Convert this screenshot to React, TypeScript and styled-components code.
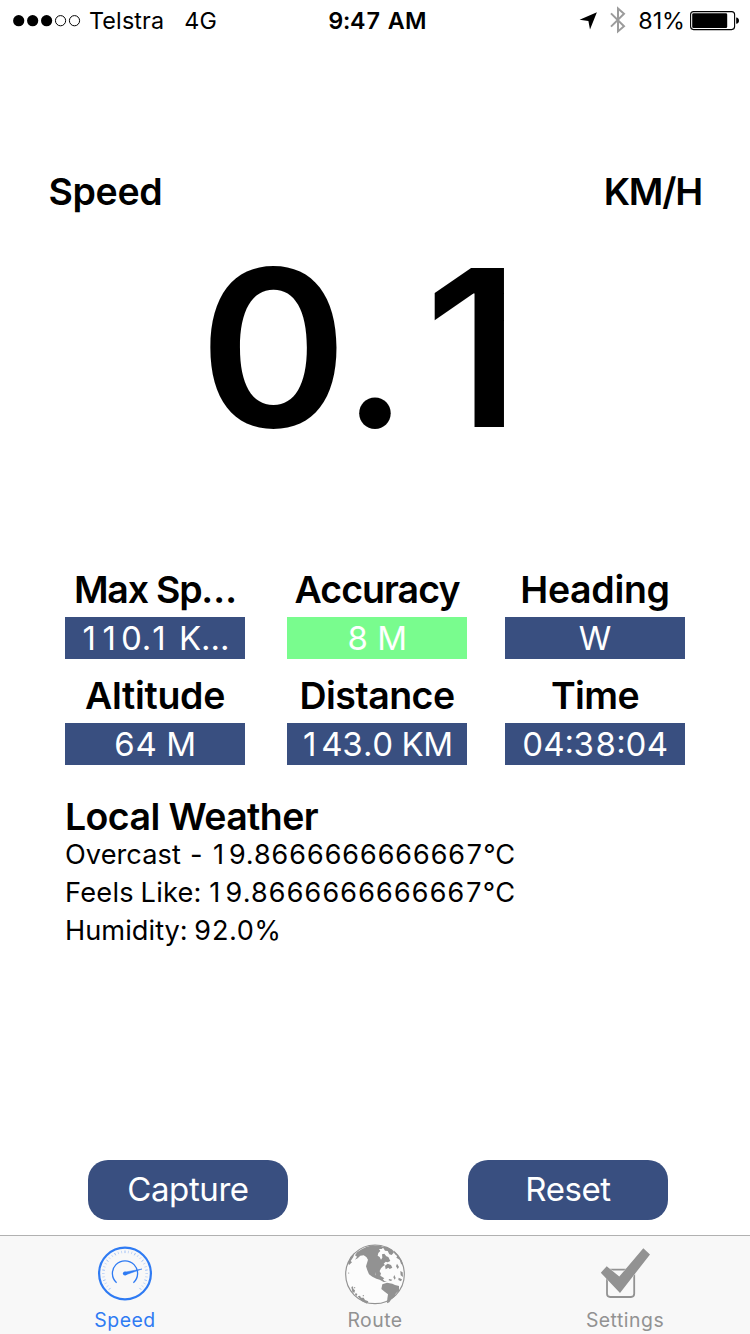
import React from "react";
import styled, { createGlobalStyle } from "styled-components";

const BLUE = "#394f80";
const GREEN = "#79fc8e";
const TINT = "#2f7bf3";
const GREY = "#929292";

const GlobalStyle = createGlobalStyle`
  html, body { margin: 0; padding: 0; background: #fff; }
  * { box-sizing: border-box; }
`;

const Screen = styled.div`
  display: flex;
  flex-direction: column;
  width: 750px;
  height: 1334px;
  overflow: hidden;
  background: #fff;
  color: #000;
  font-family: Inter, "Liberation Sans", sans-serif;
  white-space: nowrap;
`;

/* Status bar */
const StatusBar = styled.header`
  display: grid;
  grid-template-columns: 1fr auto 1fr;
  align-items: center;
  height: 41px;
  padding: 0 10px 0 13px;
  font-size: 23.3px;
  line-height: 41px;
`;

const StatusGroup = styled.div<{ $end?: boolean }>`
  display: flex;
  align-items: center;
  justify-content: ${(p) => (p.$end ? "flex-end" : "flex-start")};
  height: 41px;
`;

const Carrier = styled.span`
  margin-left: 7px;
  letter-spacing: 0.15px;
`;

const Network = styled.span`
  margin-left: 20px;
  letter-spacing: 0.2px;
`;

const Clock = styled.span`
  padding-left: 2px;
  font-weight: 600;
  letter-spacing: 0.35px;
  font-feature-settings: "tnum";
`;

const BatteryLevel = styled.span`
  margin: 0 5px 0 13px;
`;

/* Speed readout */
const Main = styled.main`
  display: flex;
  flex: 1;
  flex-direction: column;
  padding-bottom: 15px;
`;

const SpeedHeader = styled.div`
  display: flex;
  justify-content: space-between;
  margin-top: 127px;
  padding: 0 48px 0 48.5px;
  font-size: 37.5px;
  font-weight: 600;
  line-height: 47px;
`;

const Title = styled.span<{ $tracking: number }>`
  letter-spacing: ${(p) => p.$tracking}px;
`;

const Readout = styled.div`
  display: flex;
  justify-content: center;
  height: 201px;
  margin-top: 32px;
  padding-right: 8px;
  font-size: 219px;
  font-weight: 600;
  line-height: 201px;
`;

const ReadoutGlyph = styled.span<{ $width: number; $stretch?: number; $weight?: number }>`
  display: flex;
  justify-content: center;
  width: ${(p) => p.$width}px;
  font-weight: ${(p) => p.$weight ?? 600};
  transform: scaleX(${(p) => p.$stretch ?? 1});
`;

/* Stats */
const Stats = styled.section`
  display: grid;
  grid-template-columns: 222px 218px 180px;
  row-gap: 18px;
  margin: 123px 0 0 65px;
`;

const Stat = styled.div`
  display: flex;
  flex-direction: column;
  gap: 9px;
  width: 180px;
  text-align: center;
`;

const StatLabel = styled.div<{ $tracking: number }>`
  height: 37px;
  font-size: 37.5px;
  font-weight: 600;
  line-height: 37px;
  letter-spacing: ${(p) => p.$tracking}px;
`;

const StatValue = styled.div<{ $good?: boolean; $tracking: number }>`
  height: 42px;
  background: ${(p) => (p.$good ? GREEN : BLUE)};
  color: #fff;
  font-size: 33px;
  line-height: 42px;
  letter-spacing: ${(p) => p.$tracking}px;
  font-feature-settings: "tnum";
`;

/* The tabular "1" has a foot, so the plain one is padded to a digit's width */
const PlainOne = styled.span`
  padding: 0 0.16em 0 0.05em;
  font-feature-settings: "tnum" 0;
`;

/* Weather */
const Weather = styled.section`
  margin: 33px 0 0 65px;
`;

const WeatherTitle = styled.h2`
  margin: 0 0 1px;
  font-size: 37.5px;
  font-weight: 600;
  line-height: 37px;
  letter-spacing: -0.6px;
`;

const WeatherLine = styled.p<{ $tracking: number }>`
  margin: 0;
  font-size: 27.2px;
  line-height: 38px;
  letter-spacing: ${(p) => p.$tracking}px;
  word-spacing: -0.8px;
  font-feature-settings: "tnum";
`;

/* Buttons */
const Actions = styled.div`
  display: flex;
  gap: 180px;
  margin-top: auto;
  padding-left: 88px;
`;

const ActionButton = styled.button`
  width: 200px;
  height: 60px;
  padding: 0 0 2px;
  border: 0;
  border-radius: 20px;
  background: ${BLUE};
  color: #fff;
  font: 400 33px/56px Inter, "Liberation Sans", sans-serif;
  letter-spacing: -0.42px;
`;

/* Tab bar */
const TabBar = styled.nav`
  display: grid;
  grid-template-columns: repeat(3, 1fr);
  height: 99px;
  border-top: 1px solid #b1b1b1;
  background: #f8f8f8;
`;

const Tab = styled.div<{ $active?: boolean }>`
  display: flex;
  flex-direction: column;
  align-items: center;
  padding-top: 7px;
  color: ${(p) => (p.$active ? TINT : GREY)};
  font-size: 19.4px;
  line-height: 24px;
  letter-spacing: 0.5px;

  svg {
    display: block;
    margin-bottom: 1px;
  }
`;

const SignalDots = () => (
  <svg width="69" height="12" viewBox="0 0 69 12">
    {[0, 1, 2, 3, 4].map((i) => (
      <circle
        key={i}
        cx={5.7 + i * 13.95}
        cy="5.7"
        r={i < 3 ? 5.6 : 5.1}
        fill={i < 3 ? "#000" : "none"}
        stroke={i < 3 ? "none" : "#000"}
        strokeWidth="1"
      />
    ))}
  </svg>
);

const LocationArrow = () => (
  <svg width="18" height="18" viewBox="0 0 18 18">
    <path d="M17.9 0.3 11 17.6 9.4 9 0.6 7.7Z" fill="#000" />
  </svg>
);

const BluetoothSvg = styled.svg`
  margin: 0 -1px 1px 13px;
`;

const Bluetooth = () => (
  <BluetoothSvg width="16" height="28" viewBox="0 0 16 28">
    <path d="M1 7.4 14 20.2 8 25.4V2.4L14 7.8 1 20.6" fill="none" stroke="#9b9b9b" strokeWidth="2" />
  </BluetoothSvg>
);

const Battery = () => (
  <svg width="50" height="20" viewBox="0 0 50 20">
    <rect x="0.6" y="0.6" width="44" height="18" rx="3" fill="none" stroke="#000" strokeWidth="1.1" />
    <rect x="2.2" y="2.2" width="35" height="14.8" rx="1.3" fill="#000" />
    <path d="M46.2 6.6C48 6.8 49 8 49 9.7S48 12.6 46.2 12.8Z" fill="#000" />
  </svg>
);

const ticks = Array.from({ length: 31 }, (_, i) => ((135 + i * 9) * Math.PI) / 180);

const GaugeIcon = () => (
  <svg width="62" height="64" viewBox="0 0 62 64" fill="none" stroke={TINT}>
    <circle cx="31" cy="30.5" r="25.9" strokeWidth="2.2" />
    {ticks.map((a, i) => (
      <path
        key={i}
        d={`M${31 + 20.4 * Math.cos(a)} ${30.5 + 20.4 * Math.sin(a)}L${31 + 23 * Math.cos(a)} ${30.5 + 23 * Math.sin(a)}`}
        strokeWidth="0.9"
        opacity={i % 3 ? 0.28 : 0.5}
      />
    ))}
    <path d="M22.6 39.8A12.6 12.6 0 1 1 39.4 39.8" strokeWidth="1.3" />
    <circle cx="31" cy="30.5" r="2.1" fill={TINT} stroke="none" />
    <path d="M30.6 29.2 48 26 31.4 31.9Z" fill={TINT} strokeWidth="0.5" />
  </svg>
);

const GlobeIcon = () => (
  <svg width="62" height="64" viewBox="0 -1 186 192">
    <g transform="translate(-3 -1)">
      <circle cx="96" cy="94" r="88" fill="#fcfcfc" stroke={GREY} strokeWidth="3.5" />
      <g fill={GREY}>
        <path d="M42 28 56 19 70 12 88 7 112 8 122 13 116 18 108 18 112 24 106 30 104 38 110 42 114 50 118 44 117 34 124 32 130 40 136 42 142 54 134 58 128 56 122 62 126 66 120 70 114 76 110 84 112 91 104 86 96 88 96 96 104 98 108 94 110 102 118 107 124 114 132 116 122 117 110 110 100 107 88 101 78 94 73 82 69 70 72 60 75 50 70 42 62 37 52 38 44 46 36 50 42 41 36 37Z" />
        <path d="M96 86 104 84 114 90 112 98 124 106 118 110 98 104Z" />
        <path d="M119 12 132 11 148 20 152 29 146 36 139 34 134 24 126 23Z" />
        <path d="M152 22 166 36 176 52 181 68 174 62 170 50 160 44 163 38 156 34Z" />
        <path d="M22 42 34 30 31 42 23 54 27 58 18 66 15 60Z" />
        <path d="M126 68 134 62 144 66 148 74 140 78 136 74 128 79Z" />
        <path d="M138 108 148 110 144 114 137 112ZM154 96 158 105 155 110 151 103ZM162 62 168 72 164 78 159 70ZM172 84 179 88 180 102 173 97ZM167 104 177 109 174 115 166 111Z" />
        <path d="M118 124 132 119 148 122 156 126 168 129 168 143 159 151 154 162 145 169 139 178 132 181 133 167 135 154 126 147 115 138Z" />
        <path d="M25 132 30 130 31 138 36 142 34 150 28 146ZM38 150 43 153 41 159 36 155ZM44 160 51 158 54 164 62 164 66 171 76 175 72 182 56 174Z" />
        <circle cx="35" cy="134" r="1.8" />
        <circle cx="61" cy="158" r="2" />
        <circle cx="17" cy="90" r="1.8" />
      </g>
    </g>
  </svg>
);

const CheckboxIcon = () => (
  <svg width="62" height="64" viewBox="0 0 62 64">
    <rect x="13" y="26.6" width="27.2" height="27.4" rx="3.2" fill="none" stroke={GREY} strokeWidth="1.8" />
    <path
      d="M6.8 29.7 12.7 23.2 25.3 33.6 49.3 5.3 56 11.4 26 50Z"
      fill={GREY}
      stroke="#fafafa"
      strokeWidth="0.8"
      paintOrder="stroke"
    />
  </svg>
);

const Figures = ({ text }: { text: string }) => (
  <>{text.split("").map((c, i) => (c === "1" ? <PlainOne key={i}>1</PlainOne> : c))}</>
);

const stats = [
  { label: "Max Sp…", lt: -1.22, value: "110.1 K…", vt: -0.3 },
  { label: "Accuracy", lt: -0.95, value: "8 M", vt: -0.1, good: true },
  { label: "Heading", lt: -0.3, value: "W", vt: 0 },
  { label: "Altitude", lt: -0.3, value: "64 M", vt: 0.28 },
  { label: "Distance", lt: -0.54, value: "143.0 KM", vt: -0.35 },
  { label: "Time", lt: -0.6, value: "04:38:04", vt: 0 },
];

export default function App() {
  return (
    <Screen>
      <GlobalStyle />
      <StatusBar>
        <StatusGroup>
          <SignalDots />
          <Carrier>Telstra</Carrier>
          <Network>4G</Network>
        </StatusGroup>
        <Clock>9:47 AM</Clock>
        <StatusGroup $end>
          <LocationArrow />
          <Bluetooth />
          <BatteryLevel>81%</BatteryLevel>
          <Battery />
        </StatusGroup>
      </StatusBar>
      <Main>
        <SpeedHeader>
          <Title $tracking={-0.35}>Speed</Title>
          <Title $tracking={-1.2}>KM/H</Title>
        </SpeedHeader>
        <Readout>
          <ReadoutGlyph $width={141} $stretch={1.03}>0</ReadoutGlyph>
          <ReadoutGlyph $width={62} $weight={540}>.</ReadoutGlyph>
          <ReadoutGlyph $width={133} $stretch={1.04}>1</ReadoutGlyph>
        </Readout>
        <Stats>
          {stats.map((s) => (
            <Stat key={s.label}>
              <StatLabel $tracking={s.lt}>{s.label}</StatLabel>
              <StatValue $tracking={s.vt} $good={s.good}>
                <Figures text={s.value} />
              </StatValue>
            </Stat>
          ))}
        </Stats>
        <Weather>
          <WeatherTitle>Local Weather</WeatherTitle>
          <WeatherLine $tracking={0.04}>
            <Figures text="Overcast - 19.8666666666667°C" />
          </WeatherLine>
          <WeatherLine $tracking={0.24}>
            <Figures text="Feels Like: 19.8666666666667°C" />
          </WeatherLine>
          <WeatherLine $tracking={0.04}>Humidity: 92.0%</WeatherLine>
        </Weather>
        <Actions>
          <ActionButton>Capture</ActionButton>
          <ActionButton>Reset</ActionButton>
        </Actions>
      </Main>
      <TabBar>
        <Tab $active>
          <GaugeIcon />
          Speed
        </Tab>
        <Tab>
          <GlobeIcon />
          Route
        </Tab>
        <Tab>
          <CheckboxIcon />
          Settings
        </Tab>
      </TabBar>
    </Screen>
  );
}
